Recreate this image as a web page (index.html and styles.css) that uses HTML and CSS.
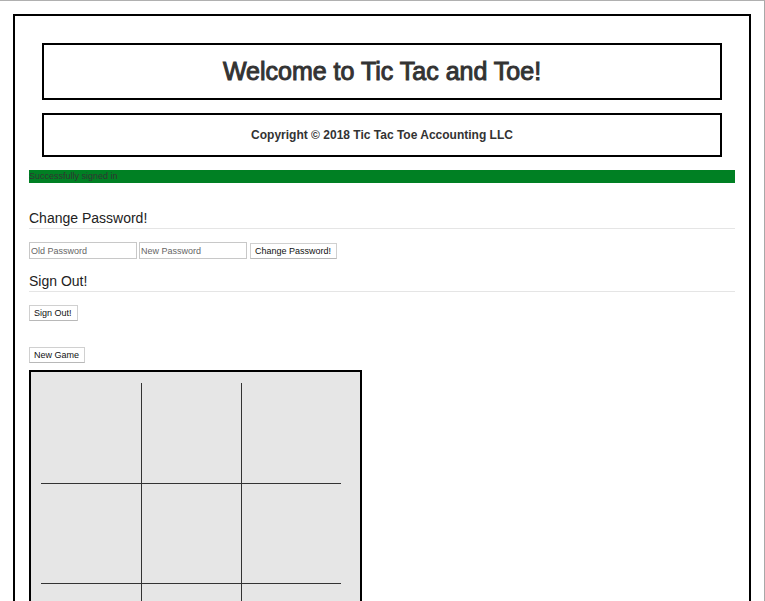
FILE: index.html
```html
<!DOCTYPE html>
<html lang="en">
<head>
<meta charset="utf-8">
<title>Tic Tac and Toe</title>
<link rel="stylesheet" href="styles.css">
</head>
<body>
<main class="container">
  <header class="banner">
    <h1 class="box title">Welcome to Tic Tac and Toe!</h1>
    <p class="box copyright">Copyright © 2018 Tic Tac Toe Accounting LLC</p>
  </header>
  <div class="message" role="status">Successfully signed in</div>
  <form class="section">
    <h2 class="legend">Change Password!</h2>
    <div class="fields">
      <input class="field" type="password" placeholder="Old Password" aria-label="Old Password">
      <input class="field" type="password" placeholder="New Password" aria-label="New Password">
      <button class="button after-field" type="button">Change Password!</button>
    </div>
  </form>
  <form class="section">
    <h2 class="legend">Sign Out!</h2>
    <button class="button" type="button">Sign Out!</button>
  </form>
  <section class="game">
    <button class="button" type="button">New Game</button>
    <div class="board">
      <div class="cell"></div><div class="cell"></div><div class="cell"></div>
      <div class="cell"></div><div class="cell"></div><div class="cell"></div>
      <div class="cell"></div><div class="cell"></div><div class="cell"></div>
    </div>
  </section>
</main>
</body>
</html>
```
FILE: styles.css
```css
* {
  box-sizing: border-box;
}

html {
  scrollbar-width: none;
}

body {
  margin: 0;
  padding: 13px;
  border-top: 1px solid #b0b0b0;
  border-right: 1px solid #a8a8a8;
  background: #fff;
  color: #333;
  font: 9px/13px "Liberation Sans", Arial, sans-serif;
}

.container {
  padding: 14px;
  border: 2px solid #000;
}

.banner {
  display: grid;
  gap: 13px;
  padding: 13px;
}

.box {
  margin: 0;
  border: 2px solid #000;
  text-align: center;
}

.title {
  padding: 12px;
  font-size: 25px;
  font-weight: normal;
  line-height: 29px;
  -webkit-text-stroke: 1px currentColor;
}

.copyright {
  padding: 12px;
  font-size: 12px;
  font-weight: bold;
  line-height: 16px;
}

.message {
  margin-bottom: 26px;
  background: #008023;
}

.section {
  margin-bottom: 13px;
}

.legend {
  margin: 0 0 13px;
  border-bottom: 1px solid #e5e5e5;
  color: #222;
  font-size: 14px;
  font-weight: normal;
  line-height: 19px;
}

.fields {
  display: flex;
  align-items: flex-end;
  gap: 2px;
}

.field {
  width: 108px;
  height: 17px;
  padding: 1px;
  border: 1px solid #c8c8c8;
  background: #fff;
  font: inherit;
}

.field::placeholder {
  color: #666;
}

.button {
  display: block;
  height: 16px;
  padding: 0 5px 0 4px;
  border: 1px solid #d0d0d0;
  border-bottom-color: #b8b8b8;
  background: #fff;
  color: #111;
  font: inherit;
}

.after-field {
  margin-left: 1px;
}

.game {
  padding-top: 13px;
}

.board {
  display: grid;
  grid-template: repeat(3, 100px) / repeat(3, 100px);
  width: 333px;
  margin-top: 7px;
  padding: 11px 10px;
  border: 2px solid #000;
  background: #e6e6e6;
}

.cell:not(:nth-child(3n + 1)) {
  border-left: 1px solid #333;
}

.cell:nth-child(n + 4) {
  border-top: 1px solid #333;
}
```
